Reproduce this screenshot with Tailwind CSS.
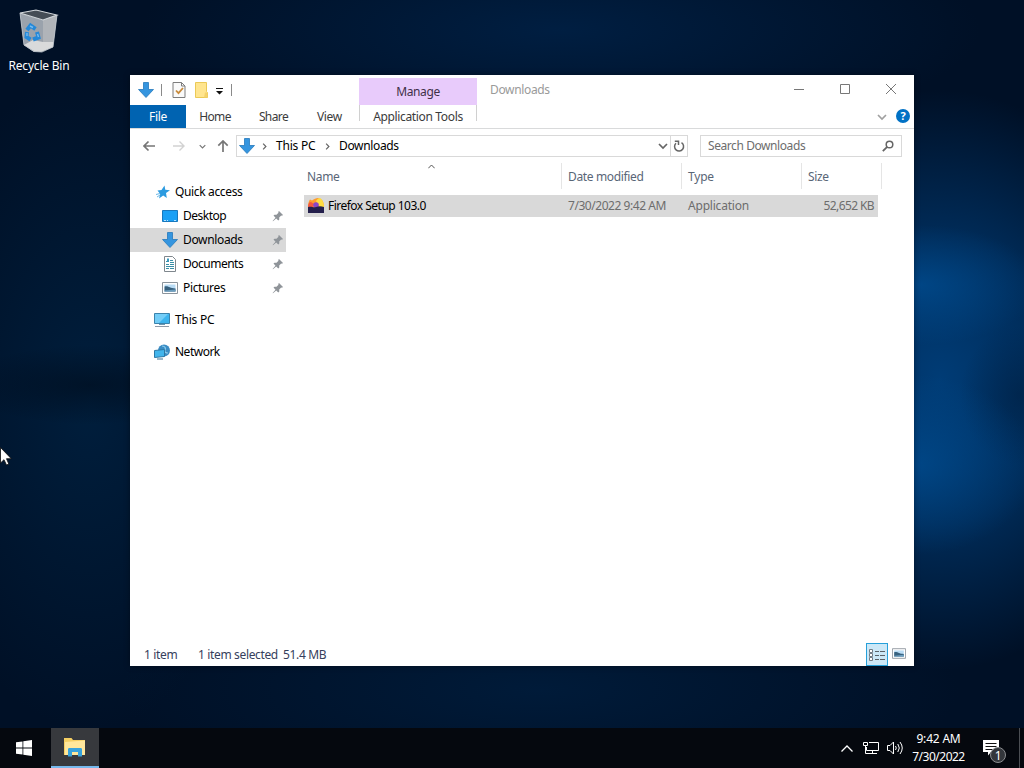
<!DOCTYPE html>
<html lang="en">
<head>
  <meta charset="UTF-8" />
  <meta name="viewport" content="width=device-width, initial-scale=1.0" />
  <title>Downloads</title>
  <script src="https://cdn.jsdelivr.net/npm/@tailwindcss/browser@4"></script>
</head>
<body class="relative w-[1024px] h-[768px] overflow-hidden bg-[#001026] bg-[radial-gradient(ellipse_120px_60px_at_920px_285px,#00529aa0,transparent),radial-gradient(ellipse_120px_90px_at_915px_465px,#00529aa0,transparent),radial-gradient(ellipse_60px_70px_at_1020px_395px,#001c3c80,transparent),radial-gradient(ellipse_230px_290px_at_940px_380px,#003c76,#003468c0_50%,transparent),radial-gradient(ellipse_420px_110px_at_560px_30px,#00285499,transparent),radial-gradient(ellipse_130px_40px_at_90px_385px,#00081480,transparent),radial-gradient(ellipse_180px_330px_at_90px_400px,#00284c99,transparent),radial-gradient(ellipse_420px_110px_at_540px_690px,#00224699,transparent)] font-['Noto_Sans','Open_Sans',sans-serif] text-[12px] leading-4 tracking-[-0.35px] text-black">

  <!-- Shared icons -->
  <svg class="hidden">
    <symbol id="download" viewBox="0 0 16 16">
      <path d="M5.5.5h5v7h5L8 15.5.5 7.500h5z" fill="#3595df" stroke="#2478bb" stroke-width=".8" />
    </symbol>
    <symbol id="pin" viewBox="0 0 12 12">
      <path d="M7 1l4 4-1 .8-.8-.2-2 2 .1 2-1 1L4.200 8.400 1 11.300l-.4-.4L3.500 7.700 1.500 5.600l1-.9 2 .1 2-2L6.200 2z" fill="#8f9499" />
    </symbol>
    <symbol id="picture" viewBox="0 0 16 12">
      <path d="M.5.5h15v11H.5z" fill="#fff" stroke="#8b949c" />
      <path d="M2.500 2.500h11v7h-11z" fill="#b9dcf5" />
      <path d="M2.500 4.500c4-1 5 2 11 2v3h-11z" fill="#38617e" />
      <path d="M2.500 8.500l11-1v2h-11z" fill="#6c9fc0" />
    </symbol>
    <symbol id="chevron" viewBox="0 0 10 10">
      <path d="M1 3l4 4 4-4" fill="none" stroke="currentColor" stroke-width="1.700" />
    </symbol>
  </svg>

  <!-- Desktop icon -->
  <div class="absolute left-0 top-2 w-[78px] flex flex-col items-center text-white">
    <svg class="w-10 h-12" viewBox="0 0 40 48">
      <path d="M1 5l12 8 2 31-10-7z" fill="#8b949f" />
      <path d="M24 11l14-4-4 32-10 4z" fill="#8f98a1" />
      <path d="M1 5l23 7v31.500L15 44 5 37z" fill="#9aa2ac" />
      <path d="M24 12l14-5-4 32-10 4z" fill="#b0b4b9" />
      <path d="M5 37l9-5 10 2 10 0v5l-12 5-7-1z" fill="#d9dadb" />
      <path d="M1 5L17 2l21 5-14 5z" fill="#454d56" stroke="#d4d9dd" stroke-width="1.100" />
      <path d="M1 5l4 32 10 6.500 8 .5 11-5 4-32" fill="none" stroke="#c3c9cf" stroke-width=".8" />
      <g fill="none" stroke="#2488d8" stroke-width="4">
        <path d="M8 22l3.500-4.500 5 3.500" />
        <path d="M18 24l1.500 5.500-5.500 2" />
        <path d="M11.500 31.500L7.500 29l.5-5" />
      </g>
      <path d="M11 18l3 1.500M18.500 26l1 3M8 25v3" fill="none" stroke="#78bcf0" stroke-width="1.400" />
    </svg>
    <span class="pt-[2px] tracking-[-0.2px]">Recycle Bin</span>
  </div>

  <!-- Explorer window -->
  <div class="absolute left-[130px] top-[75px] w-[784px] h-[591px] bg-white flex flex-col shadow-[0_0_6px_#00000060]">

    <!-- Title bar -->
    <div class="h-[30px] flex shrink-0">
      <div class="w-[229px] flex items-center pl-2 pb-px">
        <svg class="w-4 h-4"><use href="#download" /></svg>
        <span class="ml-[7px] w-px h-3 bg-[#8a8a8a]"></span>
        <svg class="ml-[10px] w-[14px] h-4" viewBox="0 0 14 16">
          <path d="M1 .5h8.500L13 4v11.500H1z" fill="#fafafa" stroke="#7d7d7d" />
          <path d="M9.500.5V4H13" fill="none" stroke="#7d7d7d" />
          <path d="M4 8.500l2.500 2.700L11 6" fill="none" stroke="#c88b3c" stroke-width="1.800" />
        </svg>
        <svg class="ml-[9px] w-[13px] h-4" viewBox="0 0 13 16">
          <path d="M.5.5h11v9l1 1v5H.5z" fill="#ffe58f" stroke="#ebc956" />
          <path d="M10 10.500h2.500v5H9z" fill="#f4d26a" />
        </svg>
        <svg class="ml-2 w-[7px] h-[7px] mt-[3px]" viewBox="0 0 7 7"><path d="M0 0h7v1H0zM0 3h7L3.500 6.500z" fill="#111" /></svg>
        <span class="ml-2 w-px h-3 bg-[#8a8a8a]"></span>
      </div>
      <div class="w-[118px] mt-[3px] bg-[#e8cbfb] flex items-center justify-center text-[#3f3048] tracking-[-0.4px]">Manage</div>
      <div class="flex-1 pl-[13px] pt-[7px] text-[#9a9a9a]">Downloads</div>
      <div class="flex items-center pr-[18px] pb-[2px] gap-9 text-[#777]">
        <svg class="w-[10px] h-[10px]" viewBox="0 0 10 10"><path d="M0 5.500h10" stroke="currentColor" /></svg>
        <svg class="w-[10px] h-[10px]" viewBox="0 0 10 10"><path d="M.5.5h9v9h-9z" fill="none" stroke="currentColor" /></svg>
        <svg class="w-[10px] h-[10px]" viewBox="0 0 10 10"><path d="M0 0l10 10M10 0L0 10" stroke="currentColor" /></svg>
      </div>
    </div>

    <!-- Ribbon tabs -->
    <div class="h-6 flex shrink-0 border-b border-[#d9dadb] text-[#3b3b3b]">
      <div class="w-14 bg-[#0063b1] text-white text-center pt-1">File</div>
      <div class="w-[58px] text-center pt-1 tracking-[-0.6px]">Home</div>
      <div class="w-[59px] text-center pt-1 tracking-[-0.6px]">Share</div>
      <div class="w-[56px] pl-[14px] pt-1">View</div>
      <div class="w-[118px] h-4 border-x border-[#d0d0d0] text-center pt-1 whitespace-nowrap">Application Tools</div>
      <div class="ml-auto flex items-center pr-1 gap-[9px]">
        <svg class="w-[10px] h-[10px] text-[#a0a0a0]"><use href="#chevron" /></svg>
        <div class="w-[14px] h-[14px] mb-px rounded-full bg-[#0071c5] text-white text-[11px] leading-[14px] font-bold text-center">?</div>
      </div>
    </div>

    <!-- Address bar -->
    <div class="h-[34px] flex items-center shrink-0 text-[#767676]">
      <svg class="ml-[13px] w-3 h-3" viewBox="0 0 12 12"><path d="M12 6H1M5.500 1.500L1 6l4.500 4.500" fill="none" stroke="currentColor" stroke-width="1.700" /></svg>
      <svg class="ml-[18px] w-3 h-3 text-[#d2d2d2]" viewBox="0 0 12 12"><path d="M0 6h11M6.500 1.500L11 6l-4.500 4.500" fill="none" stroke="currentColor" stroke-width="1.400" /></svg>
      <svg class="ml-[14px] w-[7px] h-[7px]"><use href="#chevron" /></svg>
      <svg class="ml-[11px] w-3 h-3" viewBox="0 0 12 12"><path d="M6 12V1M1.300 5.700L6 1l4.700 4.700" fill="none" stroke="currentColor" stroke-width="1.700" /></svg>
      <div class="ml-[7px] w-[452px] h-[22px] border border-[#d9d9d9] flex items-center text-black">
        <svg class="ml-[2px] w-4 h-4"><use href="#download" /></svg>
        <svg class="ml-[6px] w-[7px] h-[7px] -rotate-90 text-[#666]"><use href="#chevron" /></svg>
        <span class="ml-2 w-[41px] whitespace-nowrap tracking-[-0.2px]">This PC</span>
        <svg class="ml-[7px] w-[7px] h-[7px] -rotate-90 text-[#666]"><use href="#chevron" /></svg>
        <span class="ml-2">Downloads</span>
        <svg class="ml-auto mr-[2px] w-[10px] h-[10px] text-[#666]"><use href="#chevron" /></svg>
        <div class="w-[17px] h-full border-l border-[#d9d9d9] flex items-center justify-center">
          <svg class="w-3 h-3" viewBox="0 0 12 12"><path d="M8.500 2.700A4.500 4.500 0 1 1 3 3.200M1.800 1.300H5.500V5" fill="none" stroke="#666" stroke-width="1.500" /></svg>
        </div>
      </div>
      <div class="ml-3 w-[202px] h-[22px] border border-[#d9d9d9] flex items-center justify-between pl-[7px] pr-[7px] text-[#6d6d6d] tracking-[-0.42px]">
        <span>Search Downloads</span>
        <svg class="w-3 h-3" viewBox="0 0 12 12"><circle cx="7.500" cy="4.500" r="3.300" fill="none" stroke="#666" stroke-width="1.500" /><path d="M5.200 6.800L.8 11.200" stroke="#666" stroke-width="1.800" /></svg>
      </div>
    </div>

    <!-- Content -->
    <div class="flex-1 flex">
      <div class="w-[157px] pt-[17px]">
        <div class="h-6 flex items-center pl-[26px]">
          <svg class="w-[14px] h-[14px]" viewBox="0 0 14 14"><path d="M8.500.5l.8 4.200 4.700.5L10 8l.8 5-3.600-2.500L3 13.500 4.200 9 1.500 5.500l4-.6z" fill="#2c9be0" /><path d="M0 9.500l4-1M1 12l3-2" stroke="#6bb8e8" /></svg>
          <span class="ml-[5px]">Quick access</span>
        </div>
        <div class="h-6 flex items-center pl-8">
          <svg class="w-4 h-4" viewBox="0 0 16 16"><path d="M.5 2.500h15v11H.5z" fill="#1aa0f5" stroke="#1878bd" /><path d="M2 12.500h2m1 0h1m6 0h2" stroke="#b9e2ff" /></svg>
          <span class="ml-[5px] tracking-[-0.5px]">Desktop</span>
          <svg class="ml-auto mr-[3px] w-3 h-3"><use href="#pin" /></svg>
        </div>
        <div class="h-6 mr-px flex items-center pl-8 bg-[#d9d9d9]">
          <svg class="w-4 h-4"><use href="#download" /></svg>
          <span class="ml-[5px]">Downloads</span>
          <svg class="ml-auto mr-[2px] w-3 h-3"><use href="#pin" /></svg>
        </div>
        <div class="h-6 flex items-center pl-8">
          <svg class="w-4 h-4" viewBox="0 0 16 16">
            <path d="M2.500.5h8L13.500 3.500v12h-11z" fill="#fff" stroke="#7f878d" />
            <path d="M4 5.500h3M8 4.500h3M8 6.500h4M4 8.500h3M8 8.500h4M4 10.500h8M4 12.500h3M8 12.500h4" stroke="#3a8fa6" />
            <path d="M5 2.500h2v3H5z" fill="#3a9ac0" />
          </svg>
          <span class="ml-[5px] tracking-[-0.5px]">Documents</span>
          <svg class="ml-auto mr-[3px] w-3 h-3"><use href="#pin" /></svg>
        </div>
        <div class="h-6 flex items-center pl-8">
          <svg class="w-4 h-3"><use href="#picture" /></svg>
          <span class="ml-[5px]">Pictures</span>
          <svg class="ml-auto mr-[3px] w-3 h-3"><use href="#pin" /></svg>
        </div>
        <div class="h-6 mt-2 flex items-center pl-6">
          <svg class="w-4 h-4" viewBox="0 0 16 16"><path d="M.5 1.500h15v10H.5z" fill="#3db4ee" stroke="#3b83ac" /><path d="M1 2h13L5 11H1z" fill="#73cdf7" /><path d="M5 12.500h6" stroke="#6b95b0" /><path d="M1 14.500h14" stroke="#8f9aa8" /></svg>
          <span class="ml-[5px] tracking-[-0.2px]">This PC</span>
        </div>
        <div class="h-6 mt-2 flex items-center pl-6">
          <svg class="w-4 h-4" viewBox="0 0 16 16"><circle cx="10" cy="6.500" r="6" fill="#3a8cc4" /><path d="M8 2c3 0 4 2 3 4s1 3 3 3" fill="none" stroke="#8fd0ee" stroke-width="1.200" /><path d="M.5 6.500l10-1v7l-10 1z" fill="#42b5ec" stroke="#2c78a5" /><path d="M3 15h6" stroke="#3c7395" /></svg>
          <span class="ml-[5px] tracking-[-0.5px]">Network</span>
        </div>
      </div>

      <div class="flex-1 pl-[17px]">
        <div class="relative h-[26px] flex text-[#596677]">
          <div class="w-[258px] pl-[3px] pt-[6px] border-r border-[#e5e5e5]">Name</div>
          <div class="w-[120px] pl-[6px] pt-[6px] border-r border-[#e5e5e5]">Date modified</div>
          <div class="w-[120px] pl-[6px] pt-[6px] border-r border-[#e5e5e5] tracking-[-0.2px]">Type</div>
          <div class="w-[80px] pl-[6px] pt-[6px] border-r border-[#e5e5e5]">Size</div>
          <svg class="absolute left-[124px] top-[1px] w-[7px] h-[5px]" viewBox="0 0 7 5"><path d="M.3 4.300L3.500 1l3.200 3.300" fill="none" stroke="#555" /></svg>
        </div>
        <div class="mt-[6px] w-[574px] h-[22px] flex items-center bg-[#d9d9d9] text-[#6d6d6d]">
          <svg class="ml-1 w-4 h-4" viewBox="0 0 16 16">
            <path d="M0 10C0 5 1 3 2 1.500l2 1C6 1 8 0 10 0l4 2c1.500 2 2 4 2 8z" fill="#ff9a2e" />
            <path d="M8 3c1-2 3-3 4-3 2 1 4 4 4 10h-4z" fill="#ffdc42" />
            <path d="M0 9c0-3 1-5 3-5l3 2-1 4z" fill="#f4583f" />
            <circle cx="8" cy="7" r="2.800" fill="#8a45c8" />
            <path d="M0 9c4-1 5 1 8 0s5-1 8 0v6H0z" fill="#241f4c" />
          </svg>
          <span class="ml-1 w-[240px] text-black tracking-[-0.52px]">Firefox Setup 103.0</span>
          <span class="w-[120px] tracking-[-0.45px]">7/30/2022 9:42 AM</span>
          <span class="tracking-[-0.2px]">Application</span>
          <span class="ml-auto mr-1 tracking-[-0.6px]">52,652 KB</span>
        </div>
      </div>
    </div>

    <!-- Status bar -->
    <div class="h-[23px] shrink-0 flex items-center text-[#36405c]">
      <span class="ml-[14px] w-[54px]">1 item</span>
      <span class="w-[85px]">1 item selected</span>
      <span>51.4 MB</span>
      <div class="ml-auto w-[22px] h-[23px] border border-[#26a0da] bg-[#cce8f7] flex items-center justify-center">
        <svg class="w-4 h-[14px]" viewBox="0 0 16 14">
          <path d="M.5 1.500h3v3h-3zM.5 5.500h3v3h-3zM.5 9.500h3v3h-3z" fill="#fff" stroke="#737c85" />
          <path d="M6 3.500h4m1 0h5M6 7.500h4m1 0h5M6 11.500h4m1 0h5" stroke="#5b6268" />
        </svg>
      </div>
      <svg class="ml-1 mr-2 mb-[2px] w-[14px] h-[11px]"><use href="#picture" /></svg>
    </div>
  </div>

  <!-- Mouse pointer -->
  <svg class="absolute left-0 top-[447px] w-3 h-[19px]" viewBox="0 0 12 19"><path d="M.5.5v15.500l3.500-3.300L6.500 18l2.300-1-2.300-5.300h4.800z" fill="#fff" stroke="#111" stroke-width=".8" /></svg>

  <!-- Taskbar -->
  <div class="absolute left-0 bottom-0 w-full h-10 bg-[#05080e] flex items-center text-white">
    <svg class="ml-4 w-4 h-4" viewBox="0 0 16 16"><path d="M0 2.300L6.500 1.400v6.200H0zM7.300 1.300L16 0v7.600H7.300zM0 8.400h6.500v6.200L0 13.700zM7.300 8.400H16V16l-8.700-1.300z" fill="#fff" /></svg>
    <div class="ml-[19px] w-12 h-10 bg-[#37393d] border-b-2 border-[#76b9ed] flex items-center justify-center">
      <svg class="w-[22px] h-[20px]" viewBox="0 0 22 20">
        <path d="M0 1h7.500l1.500 2H21v15H0z" fill="#f5cf63" />
        <path d="M1 5l20-1.500V18H1z" fill="#ffe79b" />
        <path d="M4 19.500v-7c0-1 .5-1.500 1.500-1.500h11c1 0 1.500.5 1.500 1.500v7h-4V15H8v4.500z" fill="#38a3dc" />
      </svg>
    </div>
    <svg class="ml-auto w-3 h-[7px]" viewBox="0 0 12 7"><path d="M.5 6.500L6 1l5.500 5.500" fill="none" stroke="#fff" stroke-width="1.300" /></svg>
    <svg class="ml-[10px] w-4 h-[14px]" viewBox="0 0 16 14"><path d="M6 1.500h9.500v8H3.500V6M9.500 9.500v3M5 12.500h9M.5 1.500h4v3h-4zM2.500 4.500v8H5" fill="none" stroke="#fff" /></svg>
    <svg class="ml-2 w-[17px] h-[14px]" viewBox="0 0 17 14"><path d="M.5 4.500h2.500L6.500 1v12L3 9.500H.5zM8.500 5q1.500 2 0 4M10.800 3q3 4 0 8M13 1q4.500 6 0 12" fill="none" stroke="#fff" /></svg>
    <div class="w-[69px] h-9 text-center leading-[18px] flex flex-col">
      <span class="tracking-[-0.2px]">9:42 AM</span>
      <span class="tracking-[-0.5px]">7/30/2022</span>
    </div>
    <div class="relative ml-[10px] w-[36px] h-10">
      <svg class="absolute left-0 top-[12px] w-4 h-4" viewBox="0 0 16 16"><path d="M0 0h16v12H8l-3 3.500V12H0z" fill="#fff" /><path d="M2.500 3.500h11M2.500 6.500h11M2.500 9.500h7" stroke="#111" /></svg>
      <span class="absolute left-[7px] top-[19px] w-4 h-4 rounded-full bg-[#33363b] border border-[#8b8d90] text-[12px] leading-[15px] text-center">1</span>
    </div>
    <span class="w-px h-10 bg-[#4b4e53]"></span>
    <span class="w-1"></span>
  </div>

</body>
</html>
